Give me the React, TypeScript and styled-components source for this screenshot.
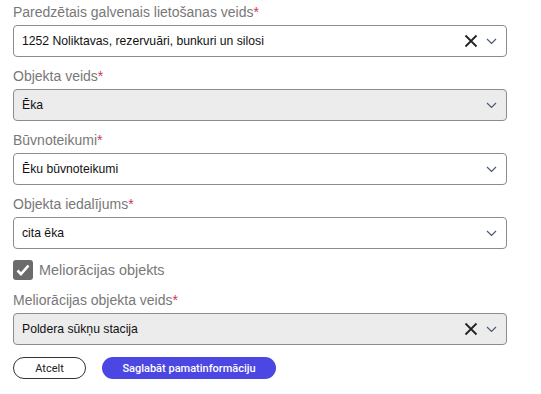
import React from 'react'
import styled, { createGlobalStyle } from 'styled-components'

const Global = createGlobalStyle`
  html, body {
    margin: 0;
    padding: 0;
    background: #fff;
  }
  * { box-sizing: border-box; }
`

const Form = styled.div`
  width: 494px;
  margin-left: 13px;
  padding-top: 3px;
  font-family: "Liberation Sans", Arial, sans-serif;
  display: flex;
  flex-direction: column;
`
const Field = styled.div`
  display: flex;
  flex-direction: column;
  margin-bottom: 10px;
`
const Label = styled.div`
  font-size: 14px;
  line-height: 18px;
  color: #787878;
  margin-bottom: 4px;
`
const Req = styled.span`
  color: #d0335a;
`
const Box = styled.div<{ $disabled?: boolean }>`
  height: 32px;
  display: flex;
  align-items: center;
  padding: 0 9px 0 8px;
  border: 1px solid #8c8c8c;
  border-radius: 4px;
  background: ${p => (p.$disabled ? '#ececec' : '#fff')};
`
const Value = styled.div`
  flex: 1;
  font-size: 12.2px;
  color: #111;
`
const Icons = styled.div`
  display: flex;
  align-items: center;
  gap: 8px;
`
const Check = styled.label`
  display: flex;
  align-items: center;
  gap: 6px;
  margin: 1px 0 11px;
  font-size: 14.4px;
  line-height: 20px;
  color: #787878;
`
const CheckBox = styled.span`
  width: 20px;
  height: 20px;
  border-radius: 3px;
  background: #6b6b6b;
  display: flex;
  align-items: center;
  justify-content: center;
`
const Buttons = styled.div`
  display: flex;
  gap: 16px;
  margin-top: 2px;
`
const Button = styled.button<{ $primary?: boolean }>`
  height: 22px;
  border-radius: 11px;
  font-family: Roboto, "Liberation Sans", sans-serif;
  font-size: 11px;
  font-weight: ${p => (p.$primary ? 500 : 400)};
  padding: 0;
  width: ${p => (p.$primary ? '174px' : '73px')};
  border: ${p => (p.$primary ? 'none' : '1px solid #333')};
  background: ${p => (p.$primary ? '#4c46e2' : '#fff')};
  color: ${p => (p.$primary ? '#fff' : '#222')};
`

const Clear = () => (
  <svg width="14" height="14" viewBox="0 0 14 14">
    <path d="M1.5 1.5L12.5 12.5M12.5 1.5L1.5 12.5" stroke="#222" strokeWidth="1.8" />
  </svg>
)
const Chevron = () => (
  <svg width="11" height="7" viewBox="0 0 11 7">
    <path d="M1 1l4.5 4.5L10 1" fill="none" stroke="#4a5a6a" strokeWidth="1.2" />
  </svg>
)

function Select({ label, value, disabled, clear }: { label: string; value: string; disabled?: boolean; clear?: boolean }) {
  return (
    <Field>
      <Label>{label}<Req>*</Req></Label>
      <Box $disabled={disabled}>
        <Value>{value}</Value>
        <Icons>
          {clear && <Clear />}
          <Chevron />
        </Icons>
      </Box>
    </Field>
  )
}

export default function App() {
  return (
    <>
      <Global />
      <Form>
        <Select label="Paredzētais galvenais lietošanas veids" value="1252 Noliktavas, rezervuāri, bunkuri un silosi" clear />
        <Select label="Objekta veids" value="Ēka" disabled />
        <Select label="Būvnoteikumi" value="Ēku būvnoteikumi" />
        <Select label="Objekta iedalījums" value="cita ēka" />
        <Check>
          <CheckBox>
            <svg width="14" height="12" viewBox="0 0 14 12">
              <path d="M1.5 6.5l3.5 3.5L12.5 1.5" fill="none" stroke="#fff" strokeWidth="2.6" />
            </svg>
          </CheckBox>
          Meliorācijas objekts
        </Check>
        <Select label="Meliorācijas objekta veids" value="Poldera sūkņu stacija" disabled clear />
        <Buttons>
          <Button>Atcelt</Button>
          <Button $primary>Saglabāt pamatinformāciju</Button>
        </Buttons>
      </Form>
    </>
  )
}
